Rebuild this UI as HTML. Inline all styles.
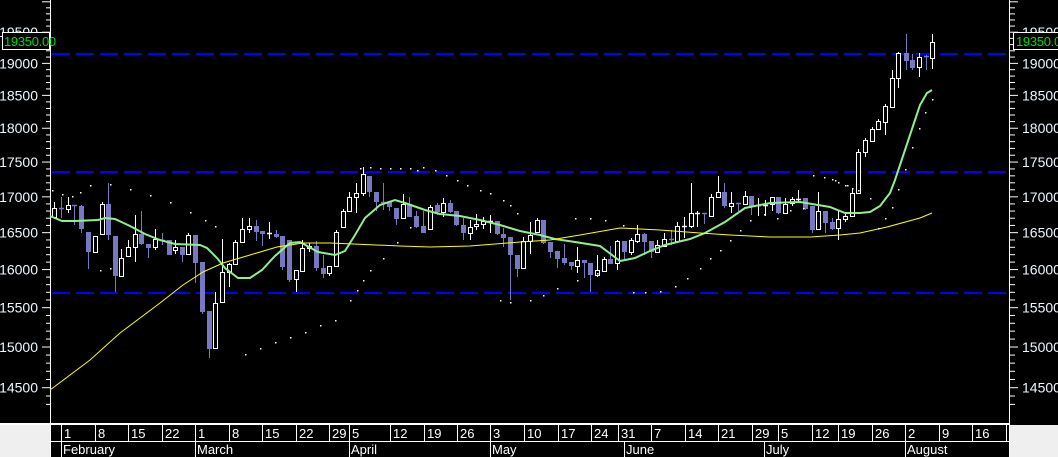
<!DOCTYPE html>
<html><head><meta charset="utf-8"><style>
html,body{margin:0;padding:0;background:#000;width:1058px;height:457px;overflow:hidden}
svg{display:block}
text{font-family:"Liberation Sans",sans-serif}
</style></head><body>
<svg id="s" width="1058" height="457" xmlns="http://www.w3.org/2000/svg">
<rect width="1058" height="457" fill="#000"/>
<rect x="0" y="425" width="50" height="32" fill="#efefef"/>
<rect x="1009" y="425" width="49" height="32" fill="#efefef"/>
<g id="grid"></g>
<g id="axis"></g>
<g id="cand"></g>
<g id="lines"></g>
<g id="bot"></g>
</svg>
<script>
var NS="http://www.w3.org/2000/svg";
function el(p,t,a,txt){var e=document.createElementNS(NS,t);for(var k in a)e.setAttribute(k,a[k]);if(txt!==undefined)e.textContent=txt;document.getElementById(p).appendChild(e);return e;}
function Y(p){return 11886-1200*Math.log(p);}
[54,172,293].forEach(function(y){el('grid','line',{x1:52,x2:1009,y1:y,y2:y,stroke:'#0000ff','stroke-width':2,'stroke-dasharray':'18 6'});});
el('axis','line',{x1:50.5,x2:50.5,y1:0,y2:423,stroke:'#fff','stroke-width':1});
el('axis','line',{x1:1009.5,x2:1009.5,y1:0,y2:423,stroke:'#fff','stroke-width':1});
for(var p=14300;p<=20200;p+=100){var y=Y(p);if(y<0||y>420)continue;var maj=p%500==0;
 el('axis','line',{x1:maj?42:46,x2:50,y1:y,y2:y,stroke:'#fff'});
 el('axis','line',{x1:1010,x2:maj?1018:1015,y1:y,y2:y,stroke:'#fff'});
 if(maj&&y>12){el('axis','text',{x:38,y:y+5,'text-anchor':'end','font-size':14,fill:'#eef6ff'},p);
  el('axis','text',{x:1022,y:y+5,'font-size':14,fill:'#eef6ff'},p);}
}
el('axis','rect',{x:2.5,y:32.5,width:47,height:17,fill:'#000',stroke:'#fff'});
el('axis','text',{x:4,y:46,'font-size':13,fill:'#00e000','letter-spacing':'-0.3'},'19350.00');
el('axis','rect',{x:1013.5,y:32.5,width:50,height:17,fill:'#000',stroke:'#fff'});
el('axis','text',{x:1016,y:46,'font-size':13,fill:'#00e000','letter-spacing':'-0.3'},'19350.00');
var C=[[54,208,217,202,218,1],[61,208,208,197,218,0],[68,205,209,197,213,1],[74,205,205,205,225,0],[81,206,228,205,233,0],[88,232,251,232,269,0],[95,236,252,236,252,1],[102,204,234,202,234,1],[108,204,234,183,240,0],[115,236,275,236,292,0],[121,258,276,249,277,1],[128,247,256,240,256,1],[135,234,247,215,262,1],[141,234,243,211,245,0],[148,244,247,244,258,0],[155,239,247,229,250,1],[162,240,240,233,245,0],[169,240,254,240,254,0],[175,247,250,240,254,1],[182,247,254,247,262,0],[188,235,254,233,254,1],[195,235,262,235,283,0],[202,262,311,262,314,0],[209,311,348,311,358,0],[215,303,348,292,348,1],[222,272,302,239,302,1],[229,264,272,263,287,1],[235,242,264,240,264,1],[242,229,242,218,242,1],[249,226,229,218,233,1],[256,226,231,220,241,0],[262,231,233,231,246,0],[269,233,233,222,239,1],[276,234,236,230,238,0],[282,236,266,236,270,0],[289,240,279,240,282,0],[296,270,279,270,292,1],[302,248,271,240,271,1],[309,246,248,243,252,1],[316,246,267,241,271,0],[323,268,273,255,278,0],[329,266,273,266,276,1],[336,232,266,230,266,1],[343,211,227,209,227,1],[349,197,211,192,211,1],[356,193,197,183,213,1],[363,174,193,167,196,1],[369,176,191,176,197,0],[376,192,201,192,211,0],[383,202,202,183,210,0],[389,202,206,202,211,0],[396,208,218,208,225,0],[403,204,218,194,218,1],[409,204,216,197,217,0],[416,216,226,211,228,0],[423,226,232,211,233,0],[430,207,229,205,229,1],[437,205,211,203,215,0],[443,203,212,198,217,1],[450,203,211,200,213,0],[456,211,224,211,226,0],[463,225,232,218,240,0],[470,227,233,220,240,1],[476,224,226,214,230,1],[483,221,224,217,229,1],[490,221,221,215,233,1],[497,221,233,221,235,0],[503,234,237,228,247,0],[510,237,254,237,300,0],[517,255,268,255,277,0],[523,241,268,237,268,1],[530,235,241,222,254,1],[537,220,232,218,232,1],[543,220,242,220,244,0],[550,242,251,242,258,0],[557,251,258,251,268,0],[564,258,262,244,265,0],[571,262,265,262,270,0],[577,260,266,247,273,1],[584,260,262,260,278,0],[590,263,274,263,292,0],[597,270,275,255,277,1],[604,259,271,257,271,1],[610,259,263,246,263,0],[617,241,263,240,270,1],[624,241,251,241,261,0],[631,240,252,238,255,1],[637,234,241,225,243,1],[644,234,241,233,255,0],[651,241,251,241,258,0],[657,245,252,240,252,1],[664,239,246,233,246,1],[671,239,239,230,245,0],[677,226,241,222,241,1],[684,226,226,217,238,1],[691,213,226,183,228,1],[697,213,213,211,227,1],[704,213,213,213,224,0],[711,197,216,194,216,1],[718,192,197,176,197,1],[724,192,205,183,208,0],[731,203,206,192,213,1],[738,203,203,203,211,0],[745,196,204,191,204,1],[751,196,205,196,215,0],[758,205,205,198,216,1],[765,205,205,200,216,1],[772,197,204,197,211,1],[778,197,212,197,214,0],[785,204,213,198,213,1],[792,199,203,197,206,1],[798,199,199,190,203,1],[805,198,208,198,210,0],[812,206,229,206,233,0],[818,211,229,192,229,1],[825,211,222,211,233,0],[832,222,228,218,230,0],[838,219,228,210,240,1],[845,216,219,212,222,1],[852,193,216,188,216,1],[858,152,193,149,193,1],[865,140,152,138,157,1],[872,129,141,127,141,1],[878,121,129,119,129,1],[885,106,122,104,135,1],[892,78,107,70,107,1],[898,53,78,52,88,1],[906,53,60,34,70,0],[912,60,67,54,70,0],[919,57,67,53,77,1],[926,56,56,55,70,0],[932,42,58,34,69,1]];
C.forEach(function(c){var x=c[0],w=c[5]?'#fff':'#7878c0';
 el('cand','line',{x1:x+.5,x2:x+.5,y1:c[3],y2:c[4],stroke:w});
 if(c[2]-c[1]<1){el('cand','line',{x1:x-2,x2:x+3,y1:c[1]+.5,y2:c[1]+.5,stroke:w,'stroke-width':1.5});}
 else if(c[5]){el('cand','rect',{x:x-1.5,y:c[1]+.5,width:4,height:c[2]-c[1],fill:'#000',stroke:'#fff'});}
 else el('cand','rect',{x:x-2,y:c[1],width:5,height:c[2]-c[1]+1,fill:'#7878c0'});
});
function pl(pts,a){a.points=pts.map(function(p){return p.join(',')}).join(' ');a.fill='none';el('lines','polyline',a);}
pl([[50,216],[62,221],[75,221],[98,220],[105,218],[115,219],[130,226],[145,234],[160,240],[175,244],[200,245],[207,248],[217,258],[225,268],[238,278],[250,278],[262,270],[275,256],[290,243],[300,242],[318,252],[335,255],[345,251],[355,235],[365,218],[380,205],[395,200],[405,203],[425,210],[440,214],[460,216],[480,220],[500,225],[520,231],[540,235],[555,239],[575,242],[600,246],[620,261],[635,258],[650,251],[665,245],[690,239],[705,233],[725,222],[745,208],[770,203],[800,202],[830,207],[845,213],[860,213],[870,212],[880,206],[890,193],[895,180],[900,165],[905,150],[910,135],[915,120],[920,105],[927,93],[932,90]],{stroke:'#90ee90','stroke-width':2});
pl([[50,390],[90,360],[120,333],[160,303],[183,285],[203,272],[223,263],[250,255],[277,247],[303,243],[330,243],[400,246],[430,247],[470,246],[520,242],[550,240],[580,235],[620,228],[660,230],[700,233],[730,235],[770,237],[810,237],[840,235],[860,233],[887,227],[920,218],[932,213]],{stroke:'#ffff00','stroke-width':1});
var dots=[[52,190],[62,194],[72,196],[80,192],[90,185],[110,184],[130,189],[150,195],[170,202],[190,212],[205,220],[215,226],[100,270],[110,268],[245,354],[260,348],[275,342],[290,337],[305,332],[320,325],[335,320],[350,300],[357,290],[363,280],[370,270],[383,258],[397,242],[410,227],[417,170],[423,167],[435,170],[446,175],[457,180],[467,185],[480,190],[490,193],[503,200],[510,205],[517,213],[360,168],[370,167],[380,168],[390,168],[400,168],[410,168],[500,300],[510,302],[530,300],[543,295],[557,288],[577,280],[597,273],[575,218],[590,218],[605,220],[623,225],[633,292],[645,292],[660,291],[675,286],[687,278],[700,268],[710,258],[720,250],[730,240],[740,230],[750,220],[764,214],[777,218],[790,210],[803,208],[813,175],[824,177],[835,180],[847,185],[858,190],[870,198],[832,179],[838,182],[845,185],[852,188],[878,228],[885,218],[892,207],[898,189],[905,169],[912,147],[919,128],[925,112],[932,99]];
dots.forEach(function(d){el('lines','rect',{x:d[0],y:d[1],width:1.5,height:1.5,fill:'#fff'});});
el('bot','rect',{x:50,y:425,width:959,height:32,fill:'#000'});
el('bot','line',{x1:0,x2:1009,y1:424,y2:424,stroke:'#fff','stroke-width':2});
el('bot','line',{x1:50,x2:1009,y1:441.5,y2:441.5,stroke:'#fff'});
el('bot','line',{x1:50.5,x2:50.5,y1:423,y2:457,stroke:'#fff'});
var D=[[61,'1'],[95,'8'],[128,'15'],[162,'22'],[195,'1'],[229,'8'],[262,'15'],[296,'22'],[329,'29'],[349,'5'],[390,'12'],[424,'19'],[457,'26'],[490,'3'],[524,'10'],[558,'17'],[591,'24'],[618,'31'],[651,'7'],[685,'14'],[718,'21'],[752,'29'],[778,'5'],[812,'12'],[838,'19'],[872,'26'],[905,'2'],[939,'9'],[972,'16'],[1006,'']];
D.forEach(function(d){el('bot','line',{x1:d[0]+.5,x2:d[0]+.5,y1:425,y2:441,stroke:'#fff'});el('bot','text',{x:d[0]+3,y:438,'font-size':13,fill:'#fff'},d[1]);});
var M=[[61,'February'],[195,'March'],[349,'April'],[490,'May'],[624,'June'],[764,'July'],[905,'August']];
M.forEach(function(d){el('bot','line',{x1:d[0]+.5,x2:d[0]+.5,y1:441,y2:457,stroke:'#fff'});el('bot','text',{x:d[0]+2,y:454,'font-size':13,fill:'#fff'},d[1]);});
el('bot','line',{x1:1009.5,x2:1009.5,y1:423,y2:457,stroke:'#fff'});
</script>
</body></html>
